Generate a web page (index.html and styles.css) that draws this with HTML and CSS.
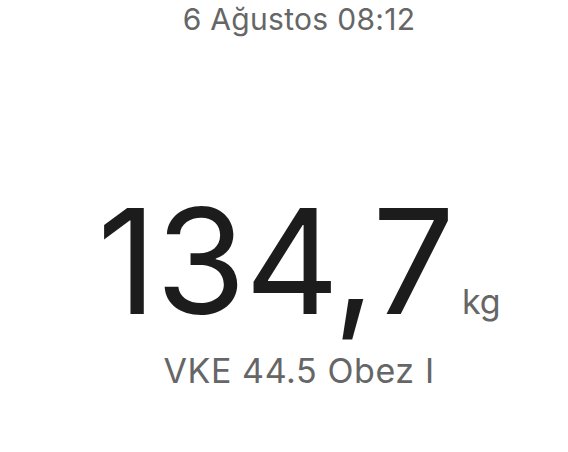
FILE: index.html
```html
<!DOCTYPE html>
<html lang="tr">
<head>
    <meta charset="UTF-8">
    <meta name="viewport" content="width=device-width, initial-scale=1.0">
    <title>Kilo</title>
    <link rel="stylesheet" href="styles.css">
</head>
<body>
    <div class="screen">
        <div class="date">6 Ağustos 08:12</div>
        <div class="weight">
            <span class="value">134,7</span>
            <span class="unit">kg</span>
        </div>
        <div class="bmi">VKE 44.5 Obez I</div>
    </div>
</body>
</html>
```

FILE: styles.css
```css
body {
    margin: 0;
    background-color: #ffffff;
    font-family: Inter, "Noto Sans", sans-serif;
}
.screen {
    width: 538px;
    margin-left: 30px;
    height: 452px;
    display: flex;
    flex-direction: column;
    align-items: center;
}
.date {
    font-size: 30px;
    line-height: 36px;
    letter-spacing: 0.3px;
    color: #666666;
    margin-top: 1px;
}
.weight {
    display: flex;
    align-items: baseline;
    gap: 8px;
    margin-top: 159px;
}
.value {
    font-size: 146px;
    line-height: 130px;
    color: #1c1c1c;
    letter-spacing: -1px;
}
.unit {
    font-size: 34px;
    line-height: 40px;
    color: #666666;
}
.bmi {
    font-size: 34px;
    line-height: 40px;
    letter-spacing: 0.6px;
    color: #666666;
    margin-top: 25px;
}
```
